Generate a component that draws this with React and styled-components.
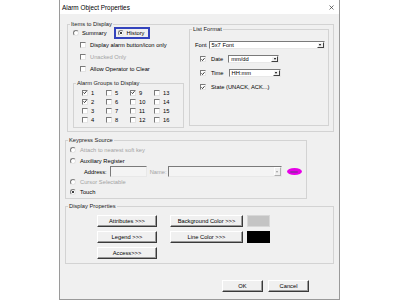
import React from 'react';
import styled, { createGlobalStyle } from 'styled-components';

const Global = createGlobalStyle`
  html, body { margin: 0; padding: 0; background: #fff; }
  body { font-family: "Liberation Sans", Arial, sans-serif; font-size: 5.75px; color: #000; }
  * { box-sizing: border-box; }
`;

const Dialog = styled.div`
  margin-left: 59px;
  width: 281px;
  height: 300px;
  border: 1px solid #9a9a9a;
  border-top: none;
  display: flex;
  flex-direction: column;
  background: #f0f0f0;
`;

const TitleBar = styled.div`
  height: 14px;
  flex: none;
  background: #fff;
  display: flex;
  align-items: center;
  justify-content: space-between;
  padding: 0 5px 0 2px;
  font-size: 6.4px;
`;

const Client = styled.div`
  flex: 1;
  display: flex;
  flex-direction: column;
  padding: 10px 0 0 5px;
`;

const Group = styled.div`
  position: relative;
  flex: none;
  width: ${p => p.$w}px;
  height: ${p => p.$h}px;
  margin-top: ${p => p.$mt || 0}px;
  margin-left: ${p => p.$ml || 0}px;
  border: 1px solid #d3d3d3;
`;

const Legend = styled.span`
  position: absolute;
  top: -4.5px;
  left: 2px;
  line-height: 7px;
  padding: 0 1px;
  background: #f0f0f0;
  color: #1a1a1a;
  white-space: nowrap;
`;

const ItemsBody = styled.div`
  display: flex;
  height: 100%;
`;

const LeftCol = styled.div`
  width: 121px;
  flex: none;
  display: flex;
  flex-direction: column;
  padding-top: 2px;
`;

const RadioRow = styled.div`
  display: flex;
  align-items: center;
  height: 12px;
  padding-left: 5px;
`;

const Option = styled.label`
  display: flex;
  align-items: center;
  gap: ${p => p.$gap || 3}px;
  height: ${p => p.$h || 12}px;
  margin-left: ${p => p.$ml || 0}px;
  color: ${p => (p.$disabled ? '#a3a3a3' : '#000')};
  white-space: nowrap;
  flex: none;
`;

const FocusBox = styled.div`
  display: flex;
  align-items: center;
  width: 36px;
  height: 12px;
  margin-left: 7px;
  padding-left: 2px;
  border: 2px solid #3444bd;
`;

const RadioDot = styled.span`
  position: relative;
  flex: none;
  width: 6px;
  height: 6px;
  border-radius: 50%;
  background: #fff;
  border: 1px solid;
  border-color: #7a7a7a #e4e4e4 #e4e4e4 #7a7a7a;
  &::after {
    content: '';
    display: ${p => (p.$checked ? 'block' : 'none')};
    position: absolute;
    left: 1px;
    top: 1px;
    width: 2px;
    height: 2px;
    border-radius: 50%;
    background: #000;
  }
`;

const CheckBox = styled.span`
  flex: none;
  width: 6px;
  height: 6px;
  background: #fff;
  border: 1px solid;
  border-color: #7a7a7a #e4e4e4 #e4e4e4 #7a7a7a;
  display: flex;
  align-items: center;
  justify-content: center;
`;

const CheckRows = styled.div`
  display: flex;
  flex-direction: column;
  padding-left: 12px;
`;

const AlarmGrid = styled.div`
  display: grid;
  grid-template-columns: repeat(4, 24px);
  grid-template-rows: repeat(4, 9px);
  grid-auto-flow: column;
  padding: 4px 0 0 8px;
`;

const Cell = styled.label`
  display: flex;
  align-items: center;
  gap: 3px;
`;

const ListBody = styled.div`
  display: flex;
  flex-direction: column;
  gap: 6px;
  padding: 11px 0 0 5px;
`;

const FieldRow = styled.div`
  display: flex;
  align-items: center;
  height: 8px;
  padding-left: ${p => p.$pl || 0}px;
  gap: ${p => p.$gap || 2}px;
`;

const Select = styled.div`
  display: flex;
  align-items: center;
  width: ${p => p.$w}px;
  height: ${p => p.$h || 8}px;
  flex: none;
  margin-left: ${p => p.$ml || 0}px;
  background: ${p => (p.$disabled ? '#f4f4f4' : '#fff')};
  border: 1px solid;
  border-color: #7a7a7a #e8e8e8 #e8e8e8 #7a7a7a;
  padding: 0 0 0 2px;
  white-space: nowrap;
`;

const DropBtn = styled.span`
  margin-left: auto;
  width: 7px;
  height: 100%;
  flex: none;
  background: #f0f0f0;
  border: 1px solid;
  border-color: #fff ${p => (p.$disabled ? '#b0b0b0' : '#404040')} ${p => (p.$disabled ? '#b0b0b0' : '#404040')} #fff;
  display: flex;
  align-items: center;
  justify-content: center;
  &::after {
    content: '';
    border-left: 1.5px solid transparent;
    border-right: 1.5px solid transparent;
    border-top: 2px solid ${p => (p.$disabled ? '#9a9a9a' : '#000')};
  }
`;

const KeyBody = styled.div`
  display: flex;
  flex-direction: column;
  padding: 3px 0 0 4px;
`;

const AddrRow = styled.div`
  display: flex;
  align-items: center;
  height: 11px;
  padding-left: 14px;
`;

const Label = styled.span`
  color: ${p => (p.$disabled ? '#a3a3a3' : '#000')};
  margin-left: ${p => p.$ml || 0}px;
  margin-right: ${p => p.$mr || 0}px;
  white-space: nowrap;
`;

const Blob = styled.span`
  flex: none;
  width: 15px;
  height: 7px;
  margin-left: 5px;
  border-radius: 50%;
  background: #e600e6;
  display: flex;
  align-items: center;
  justify-content: center;
  &::after {
    content: '';
    width: 8px;
    height: 2px;
    border-radius: 1px;
    background: #a020b0;
  }
`;

const PropsBody = styled.div`
  display: flex;
  gap: 13px;
  padding: 8px 0 0 31px;
`;

const BtnCol = styled.div`
  display: flex;
  flex-direction: column;
  gap: 4px;
`;

const BtnRow = styled.div`
  display: flex;
  align-items: center;
  gap: 4px;
`;

const Button = styled.button`
  font: inherit;
  font-size: 5.75px;
  width: ${p => p.$w}px;
  height: 12px;
  padding: 0;
  color: #000;
  background: #f0f0f0;
  border: 1px solid;
  border-color: #fff #3a3a3a #3a3a3a #fff;
  box-shadow: inset -1px -1px 0 #9a9a9a;
  white-space: nowrap;
`;

const Swatch = styled.span`
  width: 23px;
  height: 12px;
  background: ${p => p.$color};
  border: 1px solid ${p => (p.$color === '#000' ? '#000' : '#d8d8d8')};
`;

const Footer = styled.div`
  display: flex;
  justify-content: flex-end;
  gap: 5px;
  margin-top: 16px;
  padding-right: 30px;
`;

const Check = () => (
  <svg width="5" height="5" viewBox="0 0 5 5">
    <path d="M0.6 2.4 L1.9 3.8 L4.4 0.9" fill="none" stroke="#000" strokeWidth="1" />
  </svg>
);

const CloseIcon = () => (
  <svg width="5" height="5" viewBox="0 0 5 5">
    <path d="M0.5 0.5 L4.5 4.5 M4.5 0.5 L0.5 4.5" stroke="#333" strokeWidth="0.7" />
  </svg>
);

const Radio = ({ checked, disabled, children, gap = 4, h = 11 }) => (
  <Option $disabled={disabled} $gap={gap} $h={h}>
    <RadioDot $checked={checked} />
    <span>{children}</span>
  </Option>
);

const CheckOpt = ({ checked, disabled, children, h = 12, gap = 4 }) => (
  <Option $disabled={disabled} $h={h} $gap={gap}>
    <CheckBox>{checked && <Check />}</CheckBox>
    <span>{children}</span>
  </Option>
);

const groups = Array.from({ length: 16 }, (_, i) => i + 1);
const checkedGroups = [1, 2, 9];

export default function App() {
  return (
    <>
      <Global />
      <Dialog>
        <TitleBar>
          <span>Alarm Object Properties</span>
          <CloseIcon />
        </TitleBar>
        <Client>
          <Group $w={267} $h={108} $ml={2}>
            <Legend>Items to Display</Legend>
            <ItemsBody>
              <LeftCol>
                <RadioRow>
                  <Radio gap={3} h={12}>Summary</Radio>
                  <FocusBox>
                    <Radio checked gap={3} h={8}>History</Radio>
                  </FocusBox>
                </RadioRow>
                <CheckRows>
                  <CheckOpt>Display alarm button/icon only</CheckOpt>
                  <CheckOpt disabled>Unacked Only</CheckOpt>
                  <CheckOpt>Allow Operator to Clear</CheckOpt>
                </CheckRows>
                <Group $w={111} $h={45} $mt={8} $ml={5}>
                  <Legend>Alarm Groups to Display</Legend>
                  <AlarmGrid>
                    {groups.map(n => (
                      <Cell key={n}>
                        <CheckBox>{checkedGroups.includes(n) && <Check />}</CheckBox>
                        <span>{n}</span>
                      </Cell>
                    ))}
                  </AlarmGrid>
                </Group>
              </LeftCol>
              <Group $w={140} $h={97} $mt={4}>
                <Legend>List Format</Legend>
                <ListBody>
                  <FieldRow>
                    <Label>Font</Label>
                    <Select $w={116}>
                      <span>5x7 Font</span>
                      <DropBtn />
                    </Select>
                  </FieldRow>
                  <FieldRow $pl={5} $gap={5}>
                    <CheckBox><Check /></CheckBox>
                    <Label>Date</Label>
                    <Select $w={51}>
                      <span>mm/dd</span>
                      <DropBtn />
                    </Select>
                  </FieldRow>
                  <FieldRow $pl={5} $gap={5}>
                    <CheckBox><Check /></CheckBox>
                    <Label>Time</Label>
                    <Select $w={52}>
                      <span>HH:mm</span>
                      <DropBtn />
                    </Select>
                  </FieldRow>
                  <FieldRow $pl={5} $gap={5}>
                    <CheckBox><Check /></CheckBox>
                    <Label>State (UNACK, ACK...)</Label>
                  </FieldRow>
                </ListBody>
              </Group>
            </ItemsBody>
          </Group>

          <Group $w={242} $h={59} $mt={8}>
            <Legend>Keypress Source</Legend>
            <KeyBody>
              <Radio disabled>Attach to nearest soft key</Radio>
              <Radio>Auxiliary Register</Radio>
              <AddrRow>
                <Label $mr={3}>Address:</Label>
                <Select $w={37} $h={11} $disabled />
                <Label $disabled $ml={3} $mr={1}>Name:</Label>
                <Select $w={114} $h={11} $disabled>
                  <DropBtn $disabled />
                </Select>
                <Blob />
              </AddrRow>
              <Radio disabled h={10}>Cursor Selectable</Radio>
              <Radio checked h={10}>Touch</Radio>
            </KeyBody>
          </Group>

          <Group $w={269} $h={58} $mt={7}>
            <Legend>Display Properties</Legend>
            <PropsBody>
              <BtnCol>
                <Button $w={60}>Attributes &gt;&gt;&gt;</Button>
                <Button $w={60}>Legend &gt;&gt;&gt;</Button>
                <Button $w={60}>Access&gt;&gt;&gt;</Button>
              </BtnCol>
              <BtnCol>
                <BtnRow>
                  <Button $w={73}>Background Color &gt;&gt;&gt;</Button>
                  <Swatch $color="#c4c4c4" />
                </BtnRow>
                <BtnRow>
                  <Button $w={73}>Line Color &gt;&gt;&gt;</Button>
                  <Swatch $color="#000" />
                </BtnRow>
              </BtnCol>
            </PropsBody>
          </Group>

          <Footer>
            <Button $w={41}>OK</Button>
            <Button $w={41}>Cancel</Button>
          </Footer>
        </Client>
      </Dialog>
    </>
  );
}
